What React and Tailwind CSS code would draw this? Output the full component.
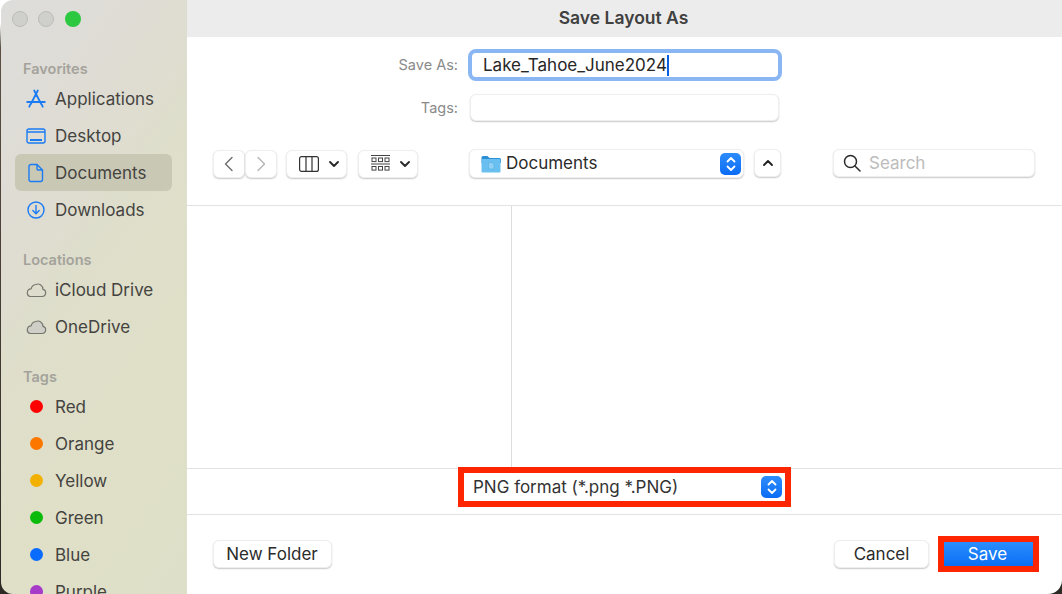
const sans = "font-['Inter','Liberation_Sans',sans-serif]";

function AppsIcon() {
  return (
    <svg width="20" height="20" viewBox="0 0 20 20" fill="none" stroke="#1a7bf2" strokeWidth="1.8" strokeLinecap="round">
      <path d="M11.8 1.5 4.8 15M8.2 1.5l7 13.5M1.2 13h17.6M4.2 15.5l-.9 2.2M15.8 15.5l.9 2.2" />
    </svg>
  );
}

function DesktopIcon() {
  return (
    <svg width="20" height="18" viewBox="0 0 20 18" fill="none" stroke="#1a7bf2" strokeWidth="1.4">
      <rect x="1" y="2" width="18" height="14" rx="2" />
      <path d="M1 5h18" />
      <path d="M4 13h12" strokeWidth="2" />
    </svg>
  );
}

function DocIcon() {
  return (
    <svg width="16" height="20" viewBox="0 0 16 20" fill="none" stroke="#1a7bf2" strokeWidth="1.4" strokeLinejoin="round">
      <path d="M3 1.5h6l5.5 5.5v9.5a2 2 0 0 1-2 2H3a2 2 0 0 1-2-2v-13a2 2 0 0 1 2-2Z" />
      <path d="M9 1.5V6a1 1 0 0 0 1 1h4.5" />
    </svg>
  );
}

function DownloadIcon() {
  return (
    <svg width="18" height="18" viewBox="0 0 18 18" fill="none" stroke="#1a7bf2" strokeWidth="1.4" strokeLinecap="round" strokeLinejoin="round">
      <circle cx="9" cy="9" r="8" />
      <path d="M9 4.5v8M5.8 9.5 9 12.7l3.2-3.2" />
    </svg>
  );
}

function CloudIcon({ fill = "none" }) {
  return (
    <svg width="22" height="16" viewBox="0 0 22 16" fill={fill} stroke="#77776f" strokeWidth="1.2" strokeLinejoin="round">
      <path d="M5 14.5h12.2a3.6 3.6 0 0 0 .7-7.1 5 5 0 0 0-7.1-4.9A5.6 5.6 0 0 0 6.1 6.9 3.9 3.9 0 0 0 5 14.5Z" />
    </svg>
  );
}

function SidebarRow({ icon, label, selected }) {
  return (
    <div className={`ml-[14px] mr-[15px] flex h-[37px] items-center rounded-md ${selected ? "bg-[#c9c8b5]" : ""}`}>
      <div className="flex w-[40px] shrink-0 items-center justify-center pl-[2px]">{icon}</div>
      <span className="pt-[1px] text-[17px] leading-none text-[#44433f]">{label}</span>
    </div>
  );
}

function SidebarHeading({ children, className = "" }) {
  return (
    <div className={`flex h-[21px] items-center pb-[1px] pl-[22px] text-[14.5px] font-semibold text-[#a4a39b] ${className}`}>
      {children}
    </div>
  );
}

function TagDot({ color }) {
  return <span className={`h-[13px] w-[13px] rounded-full ${color}`} />;
}

function Sidebar() {
  return (
    <aside className="h-[594px] w-[186px] shrink-0 overflow-hidden rounded-tl-[12px] rounded-bl-[12px] bg-[linear-gradient(125deg,#dddddb_0%,#dfdcd4_25%,#dedecb_45%,#e0e0c8_70%,#dedfc8_100%)]">
      <div className="flex h-[37px] items-center pl-[11px]">
        <span className="h-[16px] w-[16px] rounded-full border border-[#bcbcb8] bg-[#cfcfcc]" />
        <span className="ml-[10px] h-[16px] w-[16px] rounded-full border border-[#bcbcb8] bg-[#cfcfcc]" />
        <span className="ml-[11px] h-[16px] w-[16px] rounded-full bg-[#2cc840]" />
      </div>
      <SidebarHeading className="mt-[22px]">Favorites</SidebarHeading>
      <SidebarRow icon={<AppsIcon />} label="Applications" />
      <SidebarRow icon={<DesktopIcon />} label="Desktop" />
      <SidebarRow icon={<DocIcon />} label="Documents" selected />
      <SidebarRow icon={<DownloadIcon />} label="Downloads" />
      <SidebarHeading className="mt-[22px]">Locations</SidebarHeading>
      <SidebarRow icon={<CloudIcon />} label="iCloud Drive" />
      <SidebarRow icon={<CloudIcon fill="#cfcfc8" />} label="OneDrive" />
      <SidebarHeading className="mt-[22px]">Tags</SidebarHeading>
      <SidebarRow icon={<TagDot color="bg-[#fe0000]" />} label="Red" />
      <SidebarRow icon={<TagDot color="bg-[#fb7700]" />} label="Orange" />
      <SidebarRow icon={<TagDot color="bg-[#f2b000]" />} label="Yellow" />
      <SidebarRow icon={<TagDot color="bg-[#0bbb0b]" />} label="Green" />
      <SidebarRow icon={<TagDot color="bg-[#0a6cff]" />} label="Blue" />
      <SidebarRow icon={<TagDot color="bg-[#a63ac9]" />} label="Purple" />
    </aside>
  );
}

function Stepper({ className = "" }) {
  return (
    <span className={`flex h-[22px] w-[21px] items-center justify-center rounded-[5px] bg-[linear-gradient(#2e8dfb,#0a6cf5)] ${className}`}>
      <svg width="12" height="18" viewBox="0 0 12 18" fill="none" stroke="white" strokeWidth="1.8" strokeLinecap="round" strokeLinejoin="round">
        <path d="M2.5 6.5 6 3l3.5 3.5M2.5 11.5 6 15l3.5-3.5" />
      </svg>
    </span>
  );
}

function Chevron() {
  return (
    <svg width="12" height="8" viewBox="0 0 12 8" fill="none" stroke="#2a2a2a" strokeWidth="1.9" strokeLinecap="round" strokeLinejoin="round">
      <path d="M2 2 6 6l4-4" />
    </svg>
  );
}

const btn = "flex items-center rounded-[6px] border border-[#eeeeee] bg-white shadow-[0_1px_1.5px_rgba(0,0,0,0.22)]";

function FolderIcon() {
  return (
    <svg width="20" height="18" viewBox="0 0 20 18">
      <path d="M0.5 2.5a1.5 1.5 0 0 1 1.5-1.5h4.5l2 2h10a1.5 1.5 0 0 1 1.5 1.5V8H0.5Z" fill="#2a8fd6" />
      <rect x="0.5" y="4" width="19" height="13.5" rx="1" fill="#69c0f0" />
      <path d="M7.5 7.5h3.5l2 2v4.5h-5.5Z" fill="#8fd0f4" stroke="#55aee2" strokeWidth="0.6" />
    </svg>
  );
}

function Toolbar() {
  return (
    <div className="mt-[28px] flex h-[57px] items-start border-b border-[#e3e3e3] pl-[26px]">
      <button className={`${btn} mt-[1px] h-[28px] w-[32px] justify-center`}>
        <svg width="10" height="16" viewBox="0 0 10 16" fill="none" stroke="#6d6d6d" strokeWidth="1.4" strokeLinecap="round" strokeLinejoin="round">
          <path d="M8 1.5 1.5 8 8 14.5" />
        </svg>
      </button>
      <button className={`${btn} mt-[1px] h-[28px] w-[32px] justify-center`}>
        <svg width="10" height="16" viewBox="0 0 10 16" fill="none" stroke="#b5b5b5" strokeWidth="1.4" strokeLinecap="round" strokeLinejoin="round">
          <path d="M2 1.5 8.5 8 2 14.5" />
        </svg>
      </button>
      <button className={`${btn} ml-[9px] mt-[1px] h-[28px] w-[61px] pl-[12px]`}>
        <svg width="20" height="16" viewBox="0 0 20 16" fill="none" stroke="#333" strokeWidth="1.2">
          <rect x="0.6" y="0.6" width="18.8" height="14.8" rx="2" />
          <path d="M7 1v14M13 1v14" />
        </svg>
        <span className="ml-[9px]"><Chevron /></span>
      </button>
      <button className={`${btn} ml-[11px] mt-[1px] h-[28px] w-[60px] pl-[12px]`}>
        <svg width="19" height="18" viewBox="0 0 19 18" fill="none" stroke="#444" strokeWidth="1">
          <path d="M0 0.5h19M0 9h19" />
          <rect x="1" y="3" width="4" height="3.6" />
          <rect x="7.5" y="3" width="4" height="3.6" />
          <rect x="14" y="3" width="4" height="3.6" />
          <rect x="1" y="11.5" width="4" height="3.6" />
          <rect x="7.5" y="11.5" width="4" height="3.6" />
          <rect x="14" y="11.5" width="4" height="3.6" />
        </svg>
        <span className="ml-[9px]"><Chevron /></span>
      </button>
      <div className={`${btn} ml-[51px] h-[29px] w-[275px] pl-[11px] pr-[2px]`}>
        <FolderIcon />
        <span className="ml-[5px] pb-[1px] text-[17px] leading-none text-[#2b2b2b]">Documents</span>
        <Stepper className="ml-auto" />
      </div>
      <button className={`${btn} ml-[10px] h-[28px] w-[27px] justify-center`}>
        <svg width="12" height="8" viewBox="0 0 12 8" fill="none" stroke="#222" strokeWidth="1.9" strokeLinecap="round" strokeLinejoin="round">
          <path d="M2 6 6 2l4 4" />
        </svg>
      </button>
      <div className={`${btn} ml-[52px] h-[28px] w-[202px] pl-[9px]`}>
        <svg width="18" height="18" viewBox="0 0 18 18" fill="none" stroke="#2a2a2a" strokeWidth="1.5" strokeLinecap="round">
          <circle cx="7.5" cy="7.5" r="6" />
          <path d="m12 12 5 5" />
        </svg>
        <span className="ml-[8px] pt-[1px] text-[17px] leading-none text-[#bcbcbc]">Search</span>
      </div>
    </div>
  );
}

function Footer() {
  return (
    <div className="flex flex-1 items-start pl-[26px] pt-[25px]">
      <button className={`${btn} h-[28px] w-[119px] justify-center pr-[1px] text-[17px] leading-none text-[#2b2b2b]`}>New Folder</button>
      <button className={`${btn} ml-auto h-[28px] w-[95px] justify-center text-[17px] leading-none text-[#2b2b2b]`}>Cancel</button>
      <div className="-mt-[4px] ml-[9px] mr-[23px] h-[36px] w-[101px] border-[6px] border-[#fe2600]">
        <button className="flex h-full w-full items-center justify-center bg-[linear-gradient(#2b8dfd,#0a6ff5)] pr-[2px] text-[17px] leading-none text-white">Save</button>
      </div>
    </div>
  );
}

export default function App() {
  return (
    <div className={`${sans} flex h-[594px] w-[1062px] overflow-hidden bg-[linear-gradient(#ffffff_4%,#5a4f42_8%,#2d2a26_100%)] pl-[1px]`}>
      <Sidebar />
      <main className="flex h-[594px] min-w-0 flex-1 flex-col overflow-hidden rounded-br-[14px] bg-white">
        <div className="flex h-[37px] shrink-0 items-center justify-center bg-[#ececec] pr-[2px] text-[17.5px] font-semibold text-[#404040]">
          Save Layout As
        </div>

        <div className="mt-[12px] flex h-[32px] items-center">
          <label className="w-[271px] text-right text-[14.5px] text-[#8a8a8a]">Save As:</label>
          <div className="ml-[10px] flex h-[32px] w-[314px] items-center rounded-[8px] border-[4px] border-[#8ab6f3] bg-white pl-[11px] pt-[1px] text-[17px] leading-none text-[#262626]">
            Lake_Tahoe_June2024
            <span className="h-[21px] w-[2px] bg-[#0a5fe0]" />
          </div>
        </div>
        <div className="mt-[13px] flex h-[27px] items-center">
          <label className="w-[271px] text-right text-[14.5px] text-[#8a8a8a]">Tags:</label>
          <div className={`${btn} ml-[12px] h-[27px] w-[309px]`} />
        </div>

        <Toolbar />

        <div className="flex h-[263px] shrink-0 border-b border-[#e3e3e3]">
          <div className="w-[325px] border-r border-[#dcdcdc]" />
        </div>

        <div className="flex h-[46px] shrink-0 justify-center border-b border-[#e3e3e3]">
          <div className="-mt-[2px] flex h-[40px] w-[333px] items-center border-[6px] border-[#fe2600] bg-white pl-[9px] pr-[3px] text-[17px] leading-none text-[#333333]">
            <span>PNG format (*.png *.PNG)</span>
            <Stepper className="ml-auto" />
          </div>
        </div>

        <Footer />
      </main>
    </div>
  );
}
